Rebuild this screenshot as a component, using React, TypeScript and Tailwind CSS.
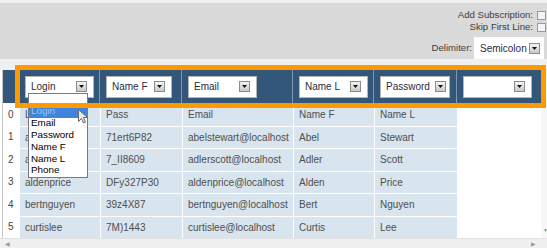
const COLS = ['Login', 'Name F', 'Email', 'Name L', 'Password', '']
const WIDTHS = 'grid-cols-[16px_81px_82px_111px_81px_83px_84px]'

const ROWS = [
  ['Login', 'Pass', 'Email', 'Name F', 'Name L'],
  ['abelstewart', '71ert6P82', 'abelstewart@localhost', 'Abel', 'Stewart'],
  ['adlerscott', '7_II8609', 'adlerscott@localhost', 'Adler', 'Scott'],
  ['aldenprice', 'DFy327P30', 'aldenprice@localhost', 'Alden', 'Price'],
  ['bertnguyen', '39z4X87', 'bertnguyen@localhost', 'Bert', 'Nguyen'],
  ['curtislee', '7M)1443', 'curtislee@localhost', 'Curtis', 'Lee'],
]

const OPTIONS = ['', 'Login', 'Email', 'Password', 'Name F', 'Name L', 'Phone']

function DropButton() {
  return (
    <span className="flex h-[11px] w-[11px] shrink-0 items-center justify-center border border-[#8c8c8c] bg-gradient-to-b from-[#f4f4f4] to-[#c9c9c9]">
      <svg width="5" height="3" viewBox="0 0 5 3">
        <path d="M0 0h5L2.5 3z" fill="#111" />
      </svg>
    </span>
  )
}

function Select({ label, className }: { label: string; className?: string }) {
  return (
    <div
      className={`flex h-[22px] items-center justify-between border border-[#b5b5b5] bg-white pl-[5px] pr-[6px] text-[10px] text-[#2c2c3c] ${className ?? ''}`}
    >
      <span className="whitespace-nowrap">{label}</span>
      <DropButton />
    </div>
  )
}

function Checkbox() {
  return <span className="h-[9px] w-[9px] border border-[#9a9a9a] bg-[#f4f4f4]" />
}

export default function App() {
  return (
    <div className="relative h-[248px] w-[547px] overflow-hidden bg-[#f0f0f0] font-['Liberation_Sans',Arial,sans-serif]">
      <div className="pt-[3px]">
        <div className="flex h-[56px] flex-col items-end bg-[#dadada] pr-[1px] text-[9.6px] text-[#3c3c3c]">
          <div className="mt-[6px] flex h-[12px] items-center gap-[4px]">
            <span>Add Subscription:</span>
            <Checkbox />
          </div>
          <div className="flex h-[12px] items-center gap-[4px]">
            <span>Skip First Line:</span>
            <Checkbox />
          </div>
          <div className="mr-[2px] mt-[4px] flex items-center gap-[2px]">
            <span>Delimiter:</span>
            <Select label="Semicolon" className="w-[70px] !border-white !pl-[5px] !pr-[3px]" />
          </div>
        </div>
      </div>

      <div className="mt-[11px] flex h-[178px] flex-col bg-white">
        <div className="flex flex-1">
          <div className="ml-[2px] border-l border-[#c6c6c6]">
            <div className={`grid h-[33px] ${WIDTHS} bg-[#33577a]`}>
              <div className="border-r border-[#7f98b0]" />
              {COLS.map((c, i) => (
                <div
                  key={i}
                  className={`flex items-center pl-[6px] ${i < COLS.length - 1 ? 'border-r border-[#7f98b0]' : ''}`}
                >
                  <Select
                    label={c}
                    className={i === 1 ? 'w-[66px]' : i === 4 ? 'w-[70px] !pr-[3px]' : 'w-[69px]'}
                  />
                </div>
              ))}
            </div>
            {ROWS.map((r, ri) => (
              <div key={ri} className={`grid h-[22.5px] ${WIDTHS} text-[10px] text-[#4f4f4f]`}>
                <div className="flex items-center pl-[5px] text-[#444]">{ri}</div>
                {r.map((cell, ci) => (
                  <div
                    key={ci}
                    className="flex items-center border-l border-t border-white bg-[#d8e4ee] pl-[5px]"
                  >
                    {cell}
                  </div>
                ))}
                <div className="border-l border-white" />
              </div>
            ))}
          </div>
          <div className="relative flex-1 bg-[#f7f7f7]">
            <span className="absolute bottom-[4px] left-[2px] text-[5px] text-[#888]">▼</span>
          </div>
        </div>
        <div className="relative h-[10px] border-t border-[#e2e2e2] bg-[#f0f0f0] text-[6px] text-[#9a9a9a]">
          <span className="absolute left-[5px] top-[1px]">◀</span>
          <span className="absolute left-[531px] top-[1px]">▶</span>
        </div>
      </div>

      <div className="absolute left-[28px] top-[93px] w-[60px] border border-[#7a7a7a] bg-white text-[9.8px] text-black">
        {OPTIONS.map((o, i) => (
          <div
            key={i}
            className={`flex h-[11.8px] items-center pl-[2px] ${i === 1 ? 'bg-[#3d86dc] text-[#a8c3e6]' : ''}`}
          >
            {o}
          </div>
        ))}
      </div>

      <div className="pointer-events-none absolute left-[15px] top-[65px] h-[43px] w-[531px] border-[5px] border-[#ff9900]" />

      <svg className="absolute left-[78px] top-[109px]" width="10" height="15" viewBox="0 0 10 15">
        <path d="M0.5 0.5v12l3-3 2 4.5 2-1-2-4.5h4z" fill="#e8e8e8" stroke="#6a6a6a" strokeWidth="1" />
      </svg>
    </div>
  )
}
